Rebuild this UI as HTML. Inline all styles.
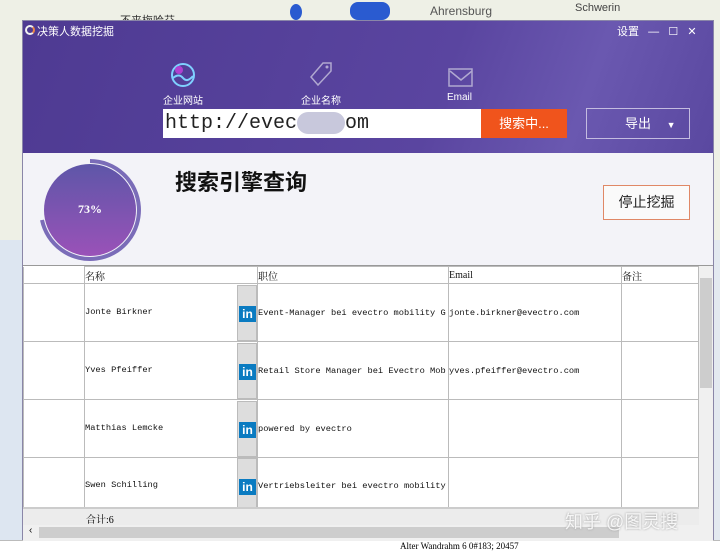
<!DOCTYPE html>
<html><head><meta charset="utf-8"><style>
*{margin:0;padding:0;box-sizing:border-box}
body{width:720px;height:552px;overflow:hidden;position:relative;background:#e9eef4;font-family:"Liberation Sans","Noto Sans CJK SC",sans-serif}
.abs{position:absolute}
.map{left:0;top:0;width:720px;height:240px;background:#eef0e6}
.win{left:22px;top:20px;width:692px;height:520px;background:#f3f3f8;border:1px solid #8a86a8}
.hdr{left:0;top:0;width:690px;height:132px;background:linear-gradient(110deg,#4e3a92 0%,#5a45a0 60%,#6a58b0 80%,#5a48a0 100%)}
.w{color:#fff;font-size:11px}
table{border-collapse:collapse;font-family:"Liberation Mono","Noto Serif CJK SC",monospace;font-size:8.7px;color:#111}
td{border:1px solid #bbb;height:58px;vertical-align:middle;background:#fff}
.hd td{font-family:"Liberation Serif","Noto Serif CJK SC",serif;font-size:10px}
.li{display:inline-block;width:20px;height:56px;background:#ddd;border:1px solid #bbb;position:relative}
.li b{position:absolute;left:1px;top:20px;width:17px;height:16px;background:#0a7bc1;color:#fff;font:bold 12px "Liberation Sans";text-align:center;line-height:16px}
</style></head><body>
<div class="abs map"></div>
<div class="abs" style="left:0;top:240px;width:22px;height:312px;background:#dde6f1"></div>
<div class="abs" style="left:714px;top:240px;width:6px;height:312px;background:#e3e9f0"></div>
<div class="abs" style="left:0;top:540px;width:720px;height:12px;background:#fff;border-top:1px solid #bbb;font:9px 'Liberation Serif';padding-left:400px">Alter Wandrahm 6 0#183; 20457</div>
<div class="abs" style="left:120px;top:12px;font-size:11px;color:#333">不来梅哈芬</div>
<div class="abs" style="left:430px;top:4px;font-size:12px;color:#555">Ahrensburg</div>
<div class="abs" style="left:575px;top:2px;font-size:11px;color:#444">Schwerin</div>
<div class="abs" style="left:290px;top:4px;width:12px;height:16px;border-radius:50%;background:#2a5bd0"></div>
<div class="abs" style="left:350px;top:2px;width:40px;height:18px;border-radius:8px;background:#2a5bd0"></div>
<div class="abs win">
 <div class="abs hdr"></div>
 <div class="abs" style="left:2px;top:4px;width:10px;height:10px;border-radius:50%;border:2px solid #f0f0f0;border-right-color:#e84"></div>
 <div class="abs w" style="left:14px;top:2px">决策人数据挖掘</div>
 <div class="abs w" style="left:594px;top:2px">设置 &nbsp;&nbsp;—&nbsp;&nbsp; ☐ &nbsp;&nbsp;✕</div>
 <svg class="abs" style="left:146px;top:40px" width="30" height="30"><circle cx="14" cy="14" r="11" fill="none" stroke="#7fd0ff" stroke-width="2"/><path d="M4 17q6-5 10 0t10-2" stroke="#7fd0ff" fill="none" stroke-width="2"/><circle cx="10" cy="9" r="4" fill="#b040d0"/></svg>
 <div class="abs w" style="left:140px;top:71px;font-size:10px">企业网站</div>
 <svg class="abs" style="left:284px;top:38px" width="28" height="30"><path d="M4 18L16 4h8v8L11 26z" fill="none" stroke="#b0a8d0" stroke-width="1.5"/><circle cx="20" cy="8" r="1.5" fill="#b0a8d0"/></svg>
 <div class="abs w" style="left:278px;top:71px;font-size:10px">企业名称</div>
 <svg class="abs" style="left:425px;top:46px" width="26" height="22"><rect x="1" y="2" width="23" height="17" fill="none" stroke="#b0a8d0" stroke-width="1.5"/><path d="M2 4l11 9 11-9" fill="none" stroke="#b0a8d0" stroke-width="1.5"/></svg>
 <div class="abs w" style="left:424px;top:71px;font-size:10px">Email</div>
 <div class="abs" style="left:140px;top:88px;width:318px;height:29px;background:#fff;font:20px 'Liberation Mono',monospace;color:#222;line-height:29px;padding-left:2px">http://evec<span style="display:inline-block;width:48px;height:22px;background:#c8c8dc;border-radius:11px;vertical-align:middle"></span>om</div>
 <div class="abs" style="left:458px;top:88px;width:86px;height:29px;background:#f0541c;color:#fff;font-size:13px;line-height:29px;text-align:center">搜索中...</div>
 <div class="abs" style="left:563px;top:87px;width:104px;height:31px;border:1px solid #c4bce0;color:#fff;font-size:13px;line-height:29px;padding-left:38px">导出 <span style="font-size:9px;margin-left:12px">▼</span></div>
 <svg class="abs" style="left:14px;top:136px" width="110" height="110"><defs><linearGradient id="g" x1="0" y1="0" x2="0" y2="1"><stop offset="0" stop-color="#5e56a8"/><stop offset="1" stop-color="#9a52b8"/></linearGradient></defs><circle cx="53" cy="53" r="46" fill="url(#g)"/><path d="M53 4A49 49 0 1 1 5 63" fill="none" stroke="#7a6cb8" stroke-width="4"/></svg>
 <div class="abs" style="left:55px;top:181px;color:#fff;font:bold 12px 'Liberation Serif'">73%</div>
 <div class="abs" style="left:152px;top:144px;font-size:22px;font-weight:bold;color:#111">搜索引擎查询</div>
 <div class="abs" style="left:580px;top:164px;width:87px;height:35px;border:1px solid #e08866;background:#fafafa;font-size:14px;line-height:33px;text-align:center;color:#222">停止挖掘</div>
 <div class="abs" style="left:0;top:244px;width:690px;height:275px;background:#fff;border-top:1px solid #999">
  <table style="position:absolute;left:0;top:0;width:676px">
   <tr class="hd" style="height:17px"><td style="height:17px;width:61px;border-top:0"></td><td style="height:17px;width:173px">名称</td><td style="height:17px;width:191px">职位</td><td style="height:17px;width:173px">Email</td><td style="height:17px">备注</td></tr>
   <tr><td></td><td><span style="float:right" class="li"><b>in</b></span><div style="padding-top:22px">Jonte Birkner</div></td><td style="white-space:nowrap;overflow:hidden;max-width:191px">Event-Manager bei evectro mobility G</td><td>jonte.birkner@evectro.com</td><td></td></tr>
   <tr><td></td><td><span style="float:right" class="li"><b>in</b></span><div style="padding-top:22px">Yves Pfeiffer</div></td><td style="white-space:nowrap;overflow:hidden;max-width:191px">Retail Store Manager bei Evectro Mob</td><td>yves.pfeiffer@evectro.com</td><td></td></tr>
   <tr><td></td><td><span style="float:right" class="li"><b>in</b></span><div style="padding-top:22px">Matthias Lemcke</div></td><td>powered by evectro</td><td></td><td></td></tr>
   <tr><td style="height:50px"></td><td style="height:50px"><span style="float:right" class="li" style="height:48px"><b>in</b></span><div style="padding-top:22px">Swen Schilling</div></td><td style="height:50px;white-space:nowrap">Vertriebsleiter bei evectro mobility</td><td style="height:50px"></td><td style="height:50px"></td></tr>
  </table>
  <div class="abs" style="left:0;top:241px;width:676px;height:18px;background:#ececec;border-top:2px solid #ccc;font:10px 'Liberation Serif','Noto Serif CJK SC',serif;padding:2px 0 0 63px">合计:6</div>
  <div class="abs" style="left:676px;top:0;width:14px;height:259px;background:#f0f0f0"><div style="margin:12px 1px 0;height:110px;background:#cdcdcd"></div></div>
  <div class="abs" style="left:0;top:259px;width:690px;height:16px;background:#f0f0f0;font-size:10px;padding-left:6px">‹<div class="abs" style="left:16px;top:2px;width:580px;height:11px;background:#cdcdcd"></div></div>
 </div>
</div>
<div class="abs" style="left:565px;top:508px;font-size:18px;color:rgba(255,255,255,.85);text-shadow:0 0 2px #999">知乎 @图灵搜</div>
</body></html>
